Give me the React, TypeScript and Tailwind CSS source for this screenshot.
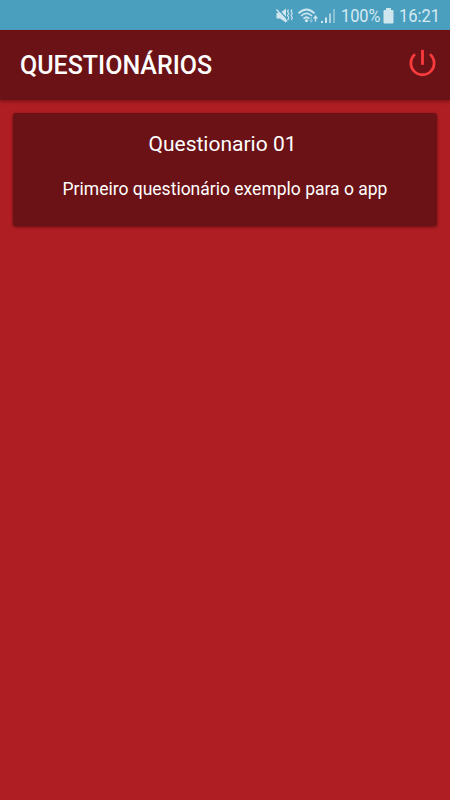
function MutedVibrateIcon() {
  return (
    <svg className="block h-4 w-[19px] shrink-0" viewBox="0 0 19 16" fill="none">
      <path d="M1.500 5h3.500l6-4.500v14L5 10.500H1.500z" fill="#cfe6ef" />
      <path d="M3 1l9.500 10.500" stroke="#4a9fbf" strokeWidth="1.300" />
      <path d="M1.500 1.500l10.500 12" stroke="#cfe6ef" strokeWidth="1.500" />
      <path d="M13.500 1.500l-1 2 1.300 2-1.300 2 1.300 2-1 2.500M17 1.500l-1 2 1.300 2-1.300 2 1.300 2-1 2.500" stroke="#cfe6ef" strokeWidth="1.200" />
    </svg>
  );
}

function WifiIcon() {
  return (
    <svg className="block h-4 w-[21px] shrink-0" viewBox="0 0 21 16" fill="none">
      <g stroke="#cfe6ef" strokeWidth="1.700">
        <path d="M.5 5.300Q8.500 -2.300 16.500 5.300" />
        <path d="M3 8Q8.500 2.800 14 8" />
        <path d="M5.500 10.700Q8.500 7.800 11.500 10.700" />
      </g>
      <circle cx="8.500" cy="12.600" r="1.600" fill="#cfe6ef" />
      <path d="M13.200 9v4M11.700 12l1.500 2 1.500-2" stroke="#8cc3d8" strokeWidth="1.100" />
      <path d="M17.500 7l2.600 3.500h-1.900v3h-1.400v-3h-1.900z" fill="#cfe6ef" />
    </svg>
  );
}

function SignalIcon() {
  return (
    <svg className="block h-4 w-4 shrink-0" viewBox="0 0 16 16">
      <path d="M1 13h2v2H1zM5 9.500h2V15H5z" fill="#cfe6ef" />
      <path d="M9 5.500h2V15H9z" fill="#a9d1e0" />
      <path d="M13 1h2v14h-2z" fill="#87bfd4" />
    </svg>
  );
}

function BatteryIcon() {
  return (
    <svg className="block h-4 w-[11px] shrink-0" viewBox="0 0 11 16">
      <path d="M3 0h5v2h1.500Q10.500 2 10.500 3v11.500Q10.500 15.500 9.500 15.500h-8Q.5 15.500 .5 14.500V3Q.5 2 1.500 2H3z" fill="#cfe6ef" />
    </svg>
  );
}

function PowerIcon() {
  return (
    <svg className="block h-7 w-7" viewBox="0 0 28 28" fill="none" stroke="#f93b3e" strokeWidth="2.800">
      <path d="M14.500 .8v15" />
      <path d="M7 5.300A11.600 11.600 0 1 0 22 5.300" />
    </svg>
  );
}

export default function App() {
  return (
    <div className="flex h-[800px] w-[450px] flex-col overflow-hidden bg-[#ae1e23] font-[Roboto,sans-serif] text-white">
      <div className="flex h-[30px] shrink-0 items-center justify-end bg-[#4a9fbf] pr-[9px] text-[19px] leading-[30px] text-[#d5eaf2]">
        <div className="pt-[2px]"><MutedVibrateIcon /></div>
        <div className="ml-[4px] pt-px"><WifiIcon /></div>
        <div className="ml-px pt-[2px]"><SignalIcon /></div>
        <div className="ml-[5px] w-[41px] pt-[2px]"><span className="block origin-left scale-x-[0.86]">100%</span></div>
        <div className="ml-px pt-px"><BatteryIcon /></div>
        <div className="ml-[5px] w-[42px] pt-[2px]"><span className="block origin-left scale-x-[0.87]">16:21</span></div>
      </div>
      <header className="relative flex h-[70px] shrink-0 items-center justify-between border-t border-[#750b10] bg-[#6b1216] pr-[14px] pl-5 shadow-[0_2px_3px_rgba(60,0,0,0.35)]">
        <h1 className="text-[25px] font-medium">QUESTIONÁRIOS</h1>
        <button aria-label="Sair" className="-mt-1.5"><PowerIcon /></button>
      </header>
      <main className="px-[13px] pt-[13px]">
        <section className="h-[113px] rounded-[3px] bg-[#6b1216] pt-[17px] text-center shadow-[0_1px_3px_rgba(50,0,0,0.6)]">
          <h2 className="-ml-[5px] text-[21px] leading-7">Questionario 01</h2>
          <p className="mt-[19px] text-[17.500px] leading-6">Primeiro questionário exemplo para o app</p>
        </section>
      </main>
    </div>
  );
}
